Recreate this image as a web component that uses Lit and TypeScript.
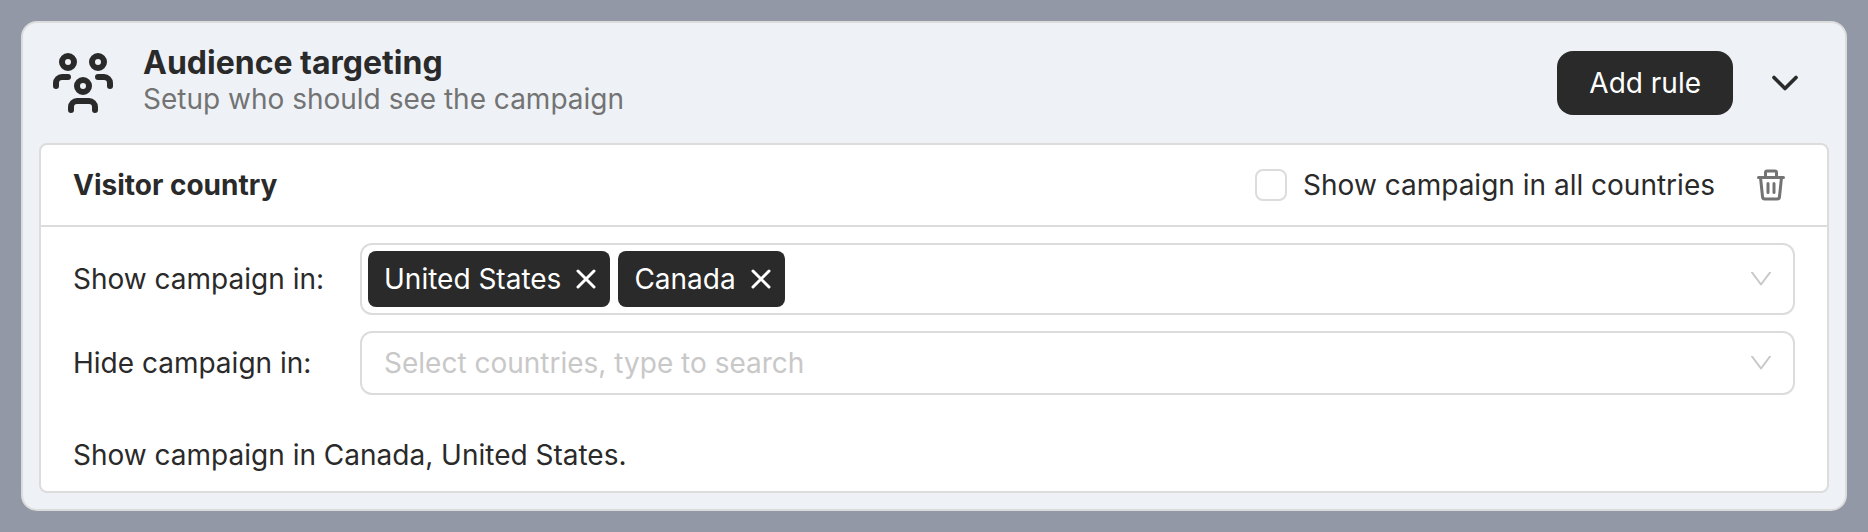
import { LitElement, html, css, svg } from "lit";
import { customElement, state } from "lit/decorators.js";

const usersIcon = svg`<svg class="users" viewBox="0 0 24 24" aria-hidden="true">
  <path d="M10 13a2 2 0 1 0 4 0a2 2 0 0 0 -4 0M8 21v-1a2 2 0 0 1 2 -2h4a2 2 0 0 1 2 2v1M15 5a2 2 0 1 0 4 0a2 2 0 0 0 -4 0M17 10h2a2 2 0 0 1 2 2v1M5 5a2 2 0 1 0 4 0a2 2 0 0 0 -4 0M3 13v-1a2 2 0 0 1 2 -2h2"/>
</svg>`;
const chevronIcon = svg`<svg class="chevron" viewBox="0 0 24 24" aria-hidden="true"><path d="M6 9l6 6l6-6"/></svg>`;
const trashIcon = svg`<svg class="trash" viewBox="0 0 28 32" aria-hidden="true">
  <path d="M1.5 8.5h25M8.5 8V3.5a1.5 1.5 0 0 1 1.5-1.5h8a1.5 1.5 0 0 1 1.5 1.5V8M3.5 8.5L5.5 27.5a2.5 2.5 0 0 0 2.5 2.5h12a2.5 2.5 0 0 0 2.5-2.5L24.5 8.5M11 14.5v9M17 14.5v9"/>
</svg>`;
const closeIcon = svg`<svg class="close" viewBox="0 0 20 20" aria-hidden="true"><path d="M2 2l16 16M18 2l-16 16"/></svg>`;
const arrowIcon = svg`<svg class="arrow" viewBox="0 0 20 14" aria-hidden="true"><path d="M1 0.5l9 12l9-12"/></svg>`;

@customElement("app-root")
export class AppRoot extends LitElement {
  @state() private shown = ["United States", "Canada"];
  @state() private open = true;

  static styles = css`
    :host {
      display: block;
      box-sizing: border-box;
      min-height: 100vh;
      padding: 21px;
      background: #9298a6;
      color: #2a2a2a;
      font: 400 28px/40px Inter, "Liberation Sans", sans-serif;
    }
    * { box-sizing: border-box; }
    h2, h3, p { margin: 0; }
    svg { display: block; flex: none; fill: none; stroke: currentColor; stroke-linecap: round; stroke-linejoin: round; }
    button { display: flex; align-items: center; justify-content: center; margin: 0; padding: 0; border: 0; background: none; color: inherit; font: inherit; cursor: pointer; }
    .card { padding: 0 16px 16px; border: 2px solid #dcdcdc; border-radius: 16px; background: #eef2f7; }
    .header { display: flex; align-items: center; padding: 24px 22px 24px 8px; }
    .heading { flex: 1; padding: 0 0 4px 24px; margin: -2px 0; }
    .heading h2 { font-size: 32px; line-height: 36px; font-weight: 700; }
    .heading p { line-height: 36px; color: #737373; }
    .users { width: 72px; height: 72px; stroke-width: 2; }
    .add { height: 64px; padding: 0 32px; border-radius: 16px; background: #2a2a2a; color: #fff; }
    .toggle { margin-left: 30px; }
    .chevron { width: 44px; height: 44px; stroke-width: 2; }
    .rule { border: 2px solid #dcdcdc; border-radius: 8px; background: #fff; }
    .rule-head { display: flex; align-items: center; height: 82px; padding: 0 42px 0 32px; border-bottom: 2px solid #dcdcdc; }
    .rule-head h3 { flex: 1; font-size: 28px; font-weight: 700; }
    .all { display: flex; align-items: center; gap: 16px; }
    .all input { appearance: none; width: 32px; height: 32px; margin: 0; border: 2px solid #dcdcdc; border-radius: 8px; background: #fff; }
    .all input:checked { background: #2a2a2a; }
    .remove { margin-left: 42px; color: #737373; }
    .trash { width: 28px; height: 32px; stroke-width: 3; }
    .fields { display: grid; grid-template-columns: auto 1fr; column-gap: 36px; row-gap: 16px; align-items: center; padding: 16px 32px; }
    .select { display: flex; align-items: center; gap: 8px; min-height: 64px; padding: 6px 22px 6px 6px; border: 2px solid #dcdcdc; border-radius: 12px; }
    .tag { display: flex; align-items: center; gap: 15px; height: 56px; padding: 0 14px 0 16px; border-radius: 8px; background: #2a2a2a; color: #fff; }
    .close { width: 20px; height: 20px; stroke-width: 3; }
    .select input { flex: 1; min-width: 0; height: 48px; padding: 0 16px; border: 0; outline: 0; background: none; color: inherit; font: inherit; }
    .select input::placeholder { color: #c8c8c8; opacity: 1; }
    .arrow { width: 20px; height: 14px; stroke: #c8c8c8; stroke-width: 2; }
    .summary { padding: 24px 32px 16px; }
  `;

  private remove(name: string) {
    this.shown = this.shown.filter((c) => c !== name);
  }

  render() {
    return html`
      <section class="card">
        <header class="header">
          ${usersIcon}
          <div class="heading">
            <h2>Audience targeting</h2>
            <p>Setup who should see the campaign</p>
          </div>
          <button class="add" type="button">Add rule</button>
          <button class="toggle" type="button" aria-label="Toggle section" aria-expanded=${this.open} @click=${() => (this.open = !this.open)}>${chevronIcon}</button>
        </header>
        ${this.open ? this.renderRule() : null}
      </section>
    `;
  }

  private renderRule() {
    return html`
      <div class="rule">
        <div class="rule-head">
          <h3>Visitor country</h3>
          <label class="all"><input type="checkbox" />Show campaign in all countries</label>
          <button class="remove" type="button" aria-label="Delete rule">${trashIcon}</button>
        </div>
        <div class="fields">
          <label for="show">Show campaign in:</label>
          <div class="select">
            ${this.shown.map((name) => html`<span class="tag">${name}<button type="button" aria-label="Remove ${name}" @click=${() => this.remove(name)}>${closeIcon}</button></span>`)}
            <input id="show" type="text" autocomplete="off" />
            ${arrowIcon}
          </div>
          <label for="hide">Hide campaign in:</label>
          <div class="select">
            <input id="hide" type="text" autocomplete="off" placeholder="Select countries, type to search" />
            ${arrowIcon}
          </div>
        </div>
        <p class="summary">Show campaign in ${[...this.shown].sort().join(", ")}.</p>
      </div>
    `;
  }
}
